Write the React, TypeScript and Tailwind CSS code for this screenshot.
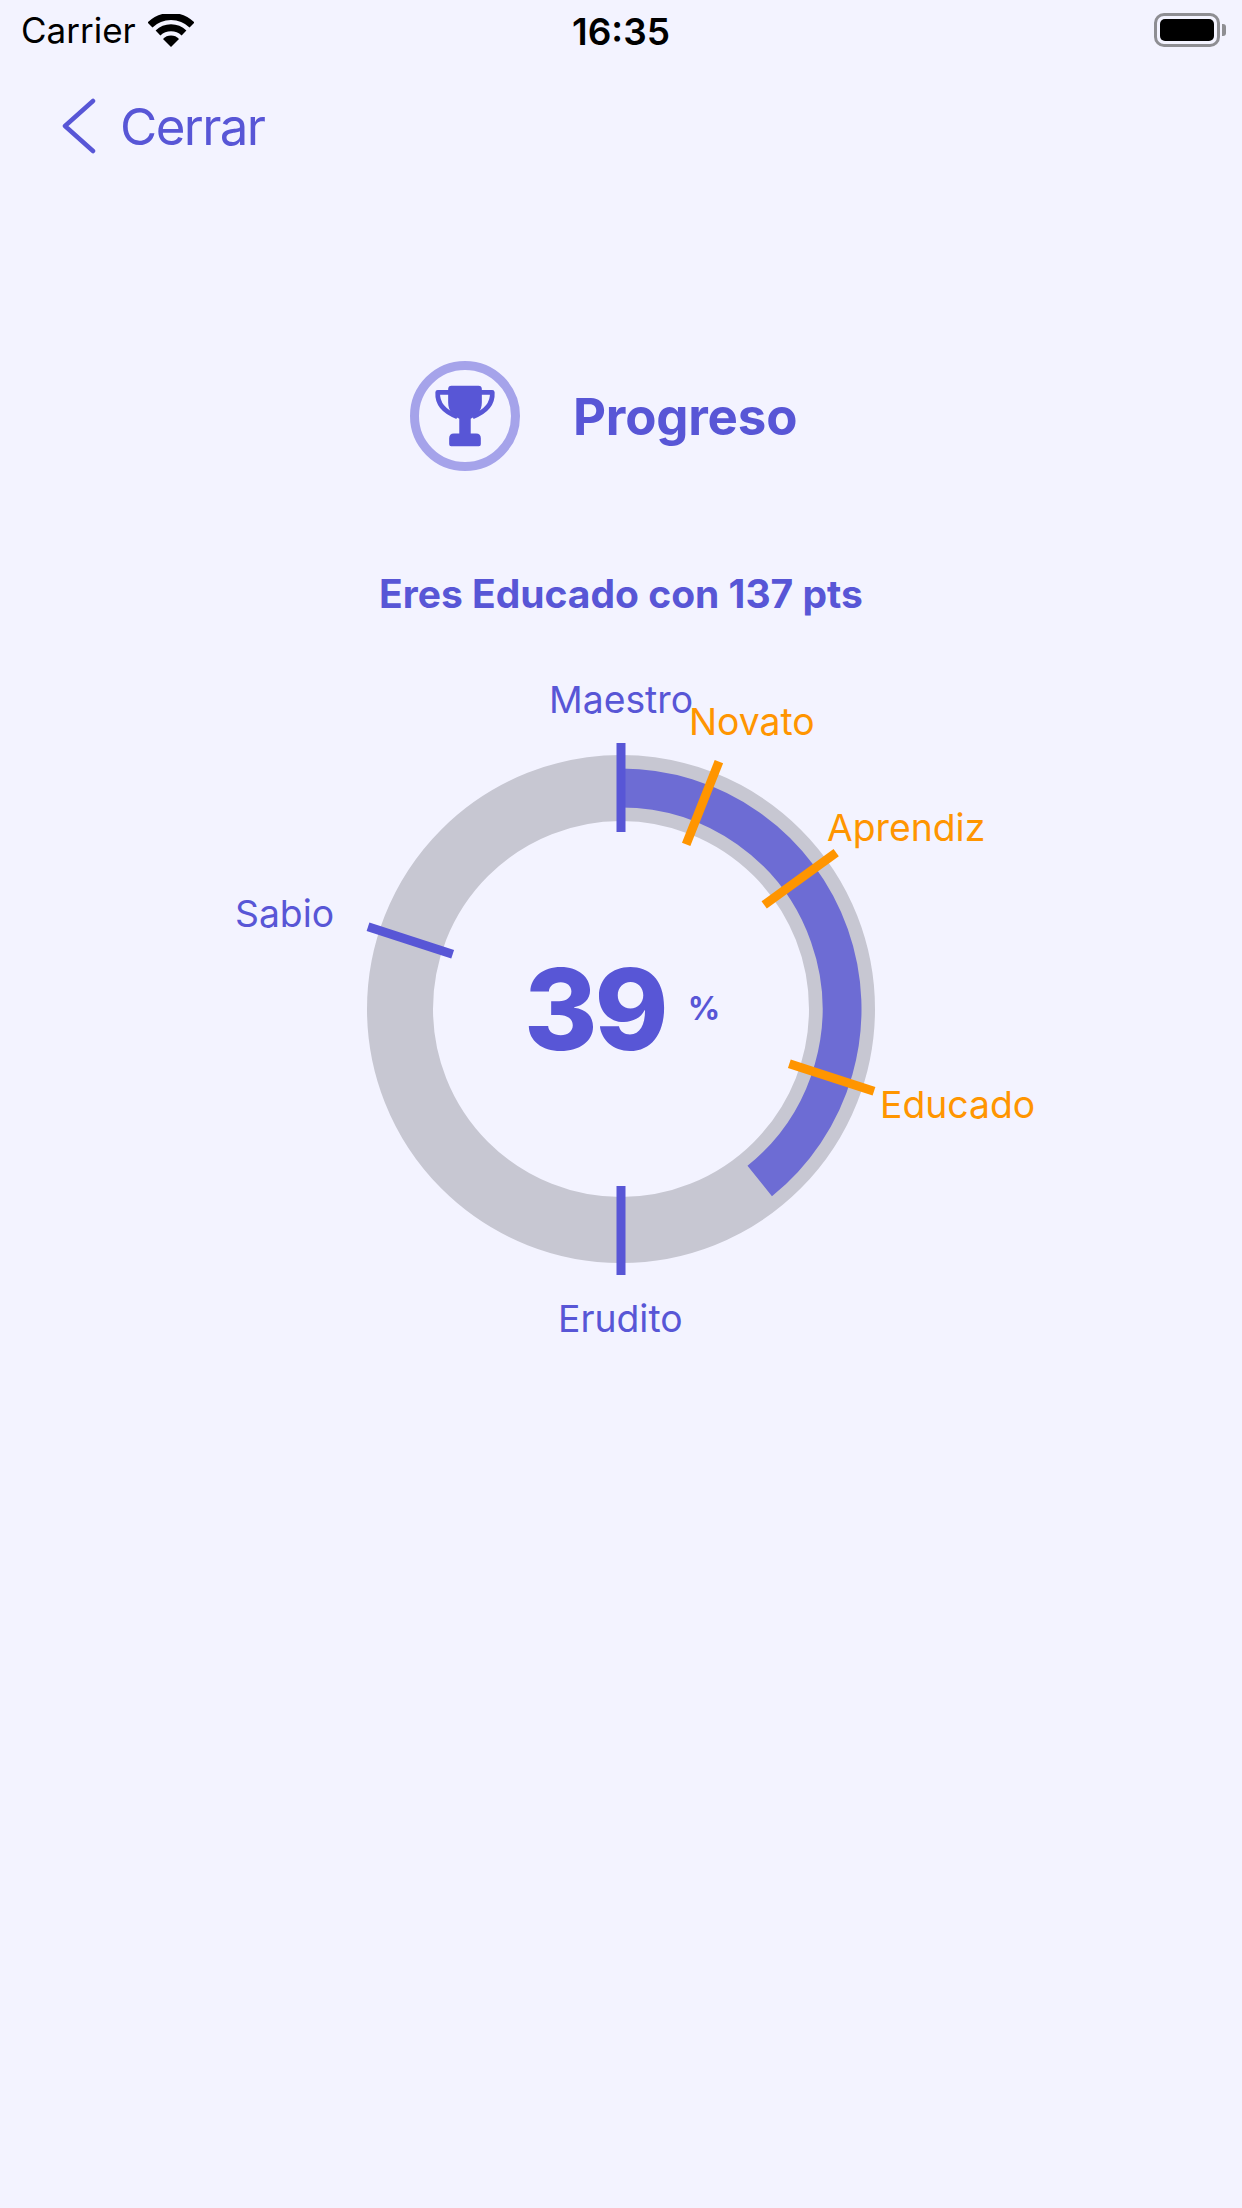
import React from 'react';

const INDIGO = '#5856D6';
const ORANGE = '#FF9500';

// pasos del progreso, en % de la vuelta
const ticks = [
  { pct: 0, color: INDIGO },
  { pct: 6, color: ORANGE },
  { pct: 15, color: ORANGE },
  { pct: 30, color: ORANGE },
  { pct: 50, color: INDIGO },
  { pct: 80, color: INDIGO },
];

const polar = (r: number, pct: number) => {
  const a = (pct / 100) * 2 * Math.PI;
  return { x: 320 + r * Math.sin(a), y: 320 - r * Math.cos(a) };
};

const Ring = () => {
  const end = polar(221, 39.2);
  return (
    <svg width="640" height="640" viewBox="0 0 640 640" className="block">
      <circle cx="320" cy="320" r="221" fill="none" stroke="#C7C7D2" strokeWidth="66" />
      <path
        d={`M320 99 A221 221 0 0 1 ${end.x} ${end.y}`}
        fill="none"
        stroke="#6D6CD4"
        strokeWidth="39"
      />
      {ticks.map((t) => {
        const a = polar(177, t.pct);
        const b = polar(266, t.pct);
        return <line key={t.pct} x1={a.x} y1={a.y} x2={b.x} y2={b.y} stroke={t.color} strokeWidth="9" />;
      })}
    </svg>
  );
};

const Trophy = () => (
  <svg width="64" height="64" viewBox="160 135 190 190" fill={INDIGO}>
    <path d="M205 150 Q205 140 215 140 H295 Q305 140 305 150 L305 190 C305 215 290 230 272 238 V282 H288 Q302 282 302 296 V314 Q302 320 296 320 H214 Q208 320 208 314 V296 Q208 282 222 282 H238 V238 C220 230 205 215 205 190 Z" />
    <path
      d="M208 160 H174 C172 195 195 218 232 232 M302 160 H336 C338 195 315 218 278 232"
      fill="none"
      stroke={INDIGO}
      strokeWidth="14"
      strokeLinejoin="round"
    />
  </svg>
);

const StatusBar = () => (
  <div className="flex h-[46px] items-center justify-between pl-[21px] pr-[16px] pt-[14px] text-black">
    <div className="flex items-center gap-[12px]">
      <span className="text-[35px] leading-none">Carrier</span>
      <svg width="46" height="33" viewBox="0 0 46 33">
        <path d="M2 11 A30 30 0 0 1 44 11" fill="none" stroke="#000" strokeWidth="7" />
        <path d="M10 19 A19 19 0 0 1 36 19" fill="none" stroke="#000" strokeWidth="7" />
        <path d="M15 25 A11 11 0 0 1 31 25 L23 33 Z" fill="#000" />
      </svg>
    </div>
    <span className="absolute left-0 top-[13px] w-full text-center text-[37px] font-semibold leading-none">16:35</span>
    <div className="flex items-center gap-[2px]">
      <div className="h-[34px] w-[66px] rounded-[10px] border-[3px] border-[#8E8E93] p-[3px]">
        <div className="h-full w-full rounded-[5px] bg-black" />
      </div>
      <div className="h-[12px] w-[4px] rounded-r-[3px] bg-[#8E8E93]" />
    </div>
  </div>
);

export default function App() {
  return (
    <div className="relative h-[2208px] w-[1242px] overflow-hidden bg-[#F3F3FF] font-[Inter,sans-serif]">
      <StatusBar />

      <div className="mt-[49px] flex h-[62px] items-center gap-[24px] pl-[62px] text-[#5856D6]">
        <svg width="34" height="56" viewBox="0 0 34 56" fill="none">
          <path d="M31 3 L3 28 L31 53" stroke={INDIGO} strokeWidth="4.5" strokeLinecap="round" strokeLinejoin="round" />
        </svg>
        <span className="text-[51px] leading-none tracking-[-1.6px]">Cerrar</span>
      </div>

      <div className="mt-[204px] flex items-center pl-[410px]">
        <div className="flex h-[110px] w-[110px] items-center justify-center rounded-full border-[9px] border-[#A5A3EA]">
          <Trophy />
        </div>
        <span className="ml-[53px] text-[51px] font-bold leading-none tracking-[-0.2px] text-[#5856D6]">Progreso</span>
      </div>

      <p className="mt-[103px] text-center text-[39px] font-bold leading-none text-[#5856D6]">
        Eres Educado con 137 pts
      </p>

      {/* Anillo con sus etiquetas */}
      <div className="relative mt-[36px] h-[700px] text-[37.3px] leading-none text-[#5856D6]">
        <div className="absolute left-[301px] top-[40px]">
          <Ring />
        </div>
        <span className="absolute left-[549px] top-[32px]">Maestro</span>
        <span className="absolute left-[689px] top-[54px] text-[#FF9500]">Novato</span>
        <span className="absolute left-[827px] top-[160px] text-[#FF9500]">Aprendiz</span>
        <span className="absolute left-[880px] top-[437px] text-[#FF9500]">Educado</span>
        <span className="absolute left-[235px] top-[246px]">Sabio</span>
        <span className="absolute left-[558px] top-[651px]">Erudito</span>
        <div className="absolute left-[524px] top-[304px] flex items-center gap-[22px]">
          <span className="text-[112px] font-extrabold leading-none tracking-[-3px]">39</span>
          <span className="text-[32px] font-bold leading-none">%</span>
        </div>
      </div>
    </div>
  );
}
